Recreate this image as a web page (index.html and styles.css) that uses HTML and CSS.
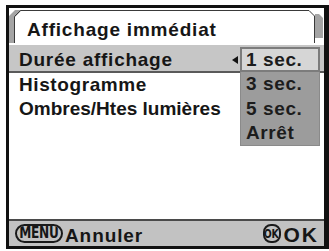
FILE: index.html
```html
<!DOCTYPE html>
<html lang="fr">
<head>
<meta charset="utf-8">
<link rel="stylesheet" href="styles.css">
</head>
<body>
<div class="frame">
  <div class="tab">
    <svg class="bevel-l" width="12" height="33" viewBox="0 0 12 33">
      <polygon points="0,6 6,0 12,0 12,1 6,7 6,33 0,33" fill="#a4a4a4"/>
      <polyline points="5.5,33 5.5,6.5 11.5,0.5 12,0.5" fill="none" stroke="#3a3a3a" stroke-width="1"/>
    </svg>
    <div class="tab-title">Affichage immédiat</div>
    <svg class="bevel-r" width="15" height="33" viewBox="0 0 15 33">
      <polyline points="0,0.5 5.5,6 5.5,33" fill="none" stroke="#3a3a3a" stroke-width="1"/>
      <polygon points="6,4 10,4 14,8 14,28 6,28" fill="#a4a4a4"/>
    </svg>
  </div>
  <div class="rows">
    <div class="row row-sel">Durée affichage</div>
    <div class="row">Histogramme</div>
    <div class="row row-tight">Ombres/Htes lumières</div>
  </div>
  <div class="bar">
    <span class="btn btn-menu"><span class="btn-txt">MENU</span></span><span class="bar-label">Annuler</span>
    <span class="spacer"></span>
    <span class="btn btn-ok"><span class="btn-txt">OK</span></span><span class="bar-ok">OK</span>
  </div>
  <div class="dropdown">
    <span class="arrow"></span>
    <div class="list">
      <div class="item item-sel">1 sec.</div>
      <div class="item">3 sec.</div>
      <div class="item">5 sec.</div>
      <div class="item">Arrêt</div>
    </div>
  </div>
</div>
</body>
</html>
```
FILE: styles.css
```css
html, body {
  margin: 0;
  padding: 0;
  background: #ffffff;
}
body {
  font-family: "Liberation Sans", Arial, sans-serif;
  font-weight: bold;
  color: #161616;
}
.frame {
  position: relative;
  box-sizing: border-box;
  margin: 5px 0 0 6px;
  width: 323px;
  height: 244px;
  border: 3px solid #111111;
  border-right-width: 5px;
  background: #ffffff;
  display: flex;
  flex-direction: column;
  overflow: hidden;
}
.tab {
  display: flex;
  height: 33px;
  margin-top: 2px;
}
.bevel-l, .bevel-r {
  display: block;
  flex: none;
}
.tab-title {
  flex: 1;
  box-sizing: border-box;
  border-top: 1px solid #3a3a3a;
  font-size: 19px;
  letter-spacing: 0.8px;
  line-height: 30px;
  padding-top: 4px;
  padding-left: 6px;
  white-space: nowrap;
}
.rows {
  margin-top: 2px;
  font-size: 19px;
  letter-spacing: 0.6px;
}
.row {
  line-height: 24px;
  padding-left: 10px;
  white-space: nowrap;
}
.row-sel {
  background: #c6c6c6;
  padding-top: 3px;
  line-height: 23px;
  border-bottom: 2px solid #5a5a5a;
  letter-spacing: 0.75px;
}
.row-tight {
  letter-spacing: 0;
}
.bar {
  margin-top: auto;
  height: 25px;
  border-top: 2px solid #4a4a4a;
  background: #c2c2c2;
  display: flex;
  align-items: center;
  padding: 0 5px 0 6px;
}
.btn {
  box-sizing: border-box;
  height: 19px;
  border: 2px solid #1a1a1a;
  display: flex;
  align-items: center;
  justify-content: center;
  margin-top: 0;
  overflow: hidden;
}
.btn-txt {
  display: inline-block;
  font-family: "DejaVu Sans Condensed", "DejaVu Sans", sans-serif;
  font-weight: bold;
  line-height: 15px;
  letter-spacing: -0.3px;
}
.btn-menu {
  width: 48px;
  border-radius: 10px;
}
.btn-menu .btn-txt {
  font-size: 15px;
  transform: scaleX(0.9);
}
.bar-label {
  font-size: 19px;
  letter-spacing: 0.9px;
  margin-left: 2px;
  line-height: 22px;
  margin-top: 4px;
}
.spacer {
  flex: 1;
}
.btn-ok {
  width: 18px;
  border-radius: 8px;
}
.btn-ok .btn-txt {
  font-size: 13px;
  transform: scaleX(0.8);
}
.bar-ok {
  font-size: 21px;
  letter-spacing: 2px;
  margin-left: 3px;
  line-height: 22px;
  margin-top: 3px;
}
.dropdown {
  position: absolute;
  left: 223px;
  top: 39px;
  display: flex;
  align-items: flex-start;
}
.arrow {
  width: 0;
  height: 0;
  border-top: 4px solid transparent;
  border-bottom: 4px solid transparent;
  border-right: 6px solid #111111;
  margin-top: 9px;
  margin-right: 2px;
}
.list {
  box-sizing: border-box;
  width: 80px;
  height: 99px;
  background: #9c9c9c;
  border: 1px solid #8a8a8a;
  border-top: none;
  font-size: 19px;
  letter-spacing: 0.6px;
  color: #1c1c1c;
}
.item {
  line-height: 24.5px;
  padding-left: 5px;
  white-space: nowrap;
}
.item-sel {
  background: #d6d6d6;
  border: 2px solid #7c7c7c;
  margin: 0 -1px;
  line-height: 20px;
  padding-top: 1px;
  padding-left: 4px;
}
```
